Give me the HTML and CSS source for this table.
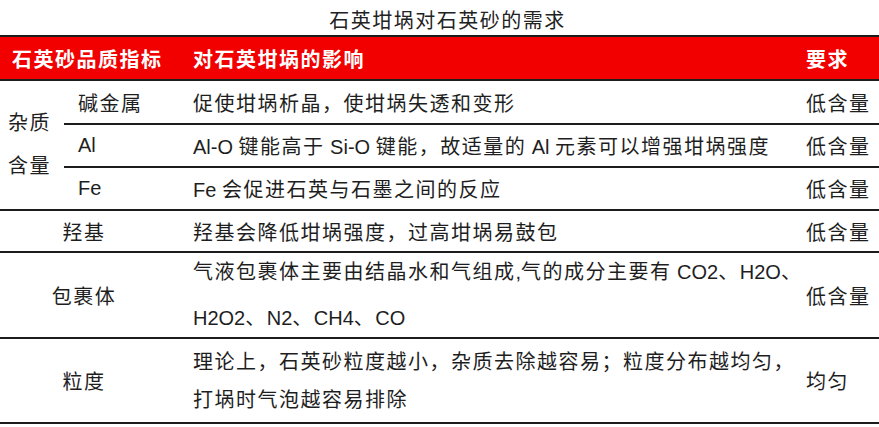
FILE: index.html
```html
<!DOCTYPE html>
<html lang="zh-CN">
<head>
<meta charset="utf-8">
<title>石英坩埚对石英砂的需求</title>
<link rel="stylesheet" href="styles.css">
</head>
<body>
<div class="page">
  <div class="title">石英坩埚对石英砂的需求</div>
  <div class="tbl">
    <div class="c hd hd-lbl">石英砂品质指标</div>
    <div class="c hd eff">对石英坩埚的影响</div>
    <div class="c hd req">要求</div>

    <div class="c grp">杂质<br>含量</div>
    <div class="c sub">碱金属</div>
    <div class="c eff">促使坩埚析晶，使坩埚失透和变形</div>
    <div class="c req">低含量</div>

    <div class="c sub"><span class="lat">Al</span></div>
    <div class="c eff"><span><span class="lat">Al-O </span>键能高于<span class="lat"> Si-O </span>键能，故适量的<span class="lat"> Al </span>元素可以增强坩埚强度</span></div>
    <div class="c req">低含量</div>

    <div class="c sub"><span class="lat">Fe</span></div>
    <div class="c eff"><span><span class="lat">Fe </span>会促进石英与石墨之间的反应</span></div>
    <div class="c req">低含量</div>

    <div class="c lbl">羟基</div>
    <div class="c eff">羟基会降低坩埚强度，过高坩埚易鼓包</div>
    <div class="c req">低含量</div>

    <div class="c lbl">包裹体</div>
    <div class="c eff multi wide"><span>气液包裹体主要由结晶水和气组成<span class="lat">,</span>气的成分主要有<span class="lat"> CO2</span>、<span class="lat">H2O</span>、<br><span class="lat">H2O2</span>、<span class="lat">N2</span>、<span class="lat">CH4</span>、<span class="lat">CO</span></span></div>
    <div class="c req">低含量</div>

    <div class="c lbl">粒度</div>
    <div class="c eff multi"><span>理论上，石英砂粒度越小，杂质去除越容易；粒度分布越均匀，<br>打埚时气泡越容易排除</span></div>
    <div class="c req">均匀</div>
  </div>
</div>
</body>
</html>
```

FILE: styles.css
```css
* { box-sizing: border-box; }
html, body { margin: 0; padding: 0; background: #ffffff; }
body {
  font-family: "Liberation Sans", "Noto Sans CJK SC", sans-serif;
  color: #1e1e1e;
  font-size: 20px;
  letter-spacing: 1.5px;
}
.page { width: 879px; }
.title {
  height: 36px;
  display: flex;
  align-items: center;
  justify-content: center;
  padding-left: 16px;
  padding-top: 2px;
  margin-bottom: -1px;
  color: #222;
}
.tbl {
  display: grid;
  grid-template-columns: 64px 116px 615px 84px;
  grid-template-rows: 44px 44px 43px 43px 42px 86px 85px;
  border-top: 2px solid #1c1c1c;
}
.c {
  display: flex;
  align-items: center;
  border-bottom: 2px solid #1c1c1c;
  white-space: nowrap;
}
.lat { letter-spacing: 0; }
.hd {
  background: #f20000;
  color: #ffffff;
  font-weight: bold;
}
.hd-lbl {
  grid-column: 1 / 3;
  padding-left: 12px;
}
.eff { padding-left: 13px; }
.req { padding-left: 11px; }
.grp {
  grid-column: 1;
  grid-row: 2 / 5;
  padding-left: 8px;
  line-height: 43px;
}
.sub { padding-left: 14px; }
.lbl {
  grid-column: 1 / 3;
  justify-content: center;
  padding-right: 12px;
}
.multi { line-height: 38px; }
.multi.wide { line-height: 46px; }
```
